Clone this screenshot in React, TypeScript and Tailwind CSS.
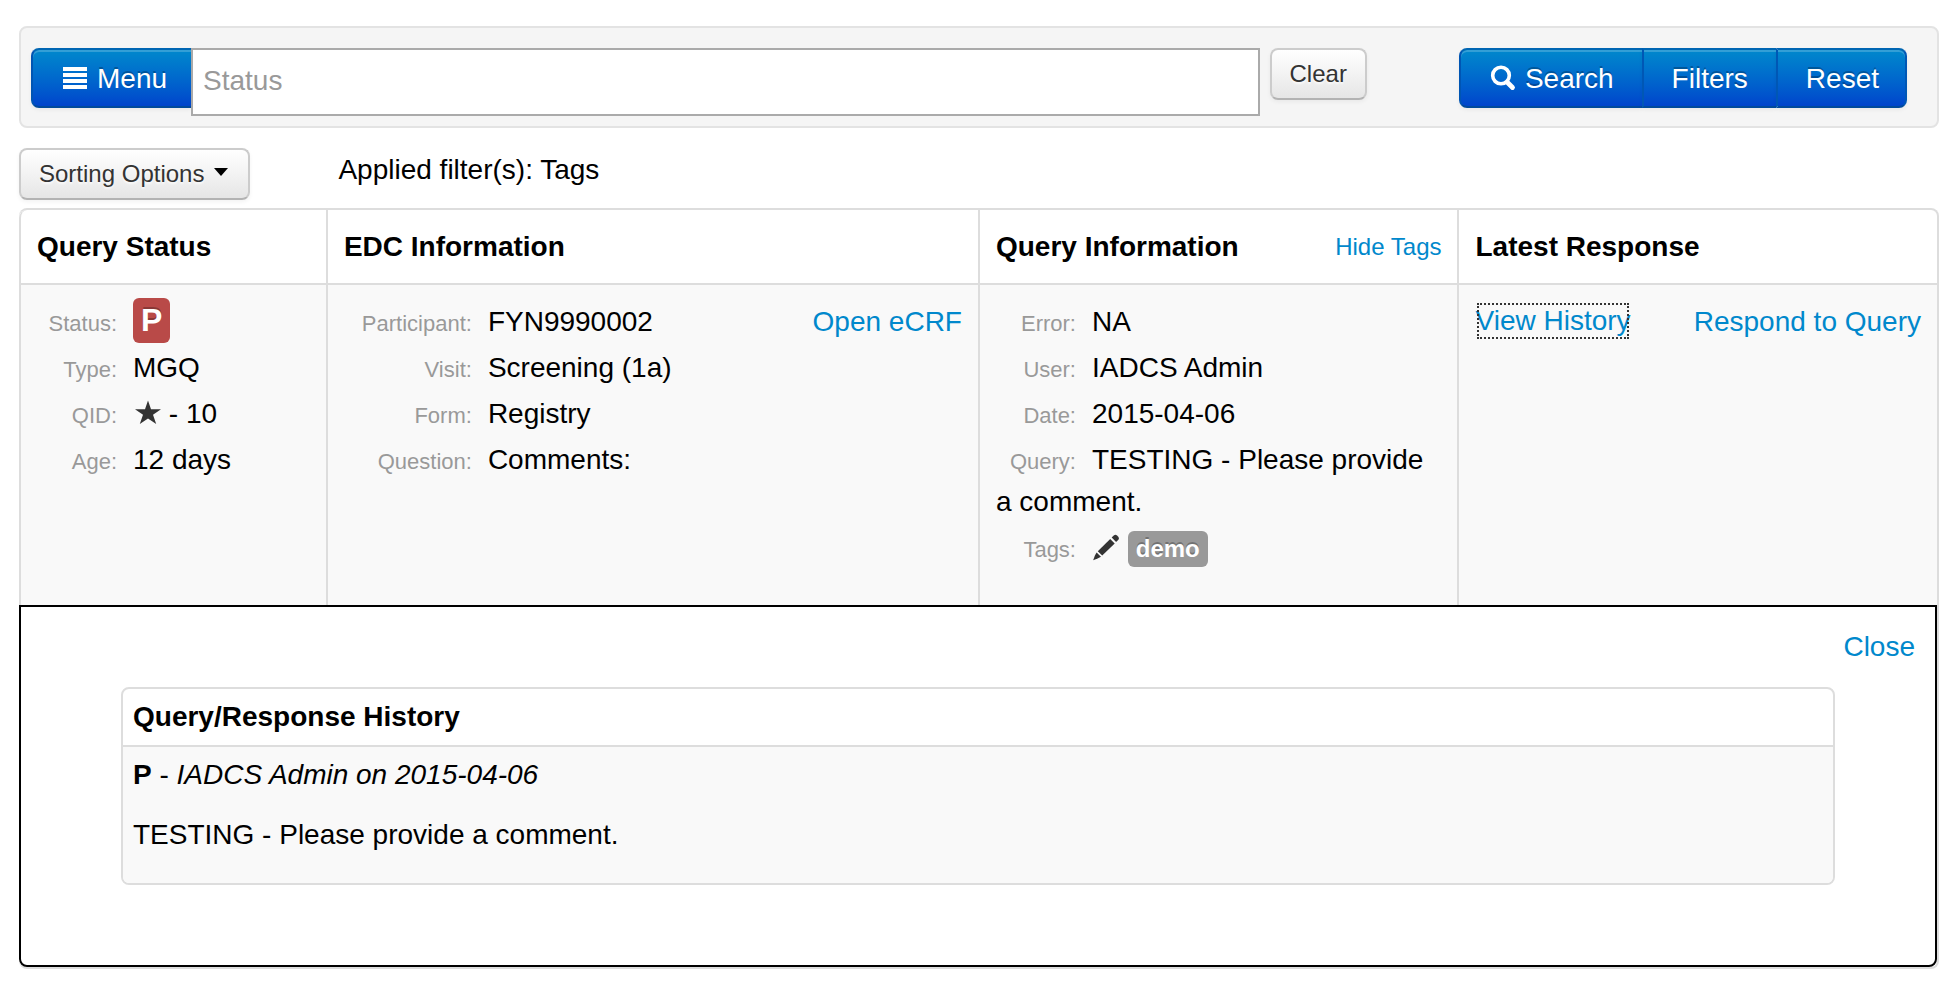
import type { ReactNode } from "react";

const primaryBtn =
  "flex h-[60px] shrink-0 items-center border-y-2 border-t-[#0066b3] border-b-[#004a9c] bg-linear-to-b from-[#0088cc] to-[#0044cc] pt-0.5 pl-7 text-[28px] leading-10 text-white [text-shadow:0_-2px_0_rgba(0,0,0,0.25)] shadow-[inset_0_2px_0_rgba(255,255,255,0.2),0_2px_4px_rgba(0,0,0,0.05)]";

const defaultBtn =
  "flex h-[52px] shrink-0 items-center rounded-lg border-2 border-[#cccccc] border-b-[#b3b3b3] bg-linear-to-b from-white to-[#e6e6e6] pl-[18px] text-2xl leading-10 text-[#333333] [text-shadow:0_2px_2px_rgba(255,255,255,0.75)] shadow-[inset_0_2px_0_rgba(255,255,255,0.2),0_2px_4px_rgba(0,0,0,0.05)]";

const cell = "border-l-2 border-[#dddddd] px-4 text-left align-top";

function JustifyIcon() {
  return (
    <svg viewBox="0 0 28 28" className="size-7" fill="currentColor" aria-hidden="true">
      <path d="M2 2h24v4H2zM2 8h24v4H2zM2 14h24v4H2zM2 20h24v4H2z" />
    </svg>
  );
}

function SearchIcon() {
  return (
    <svg viewBox="0 0 28 28" className="size-7" fill="none" stroke="currentColor" aria-hidden="true">
      <circle cx="12" cy="10.500" r="8.300" strokeWidth="3.600" />
      <path d="M18.500 17.500 23.500 22.500" strokeWidth="4.800" strokeLinecap="round" />
    </svg>
  );
}

function StarIcon() {
  return (
    <svg viewBox="0 0 28 28" className="inline-block size-7 align-[-4px]" fill="#333333" aria-hidden="true">
      <path d="M15 1.500 18 10.300H28L20 15.800 23.200 25 15 19.600 6.800 25 10 15.800 2 10.300H12z" />
    </svg>
  );
}

function PencilIcon() {
  return (
    <svg viewBox="0 0 28 28" className="inline-block size-7 align-[-4px]" fill="#333333" aria-hidden="true">
      <path d="M19.700 4.600 22 2.300Q23.500 1 25 2.400L26.300 3.700Q27.700 5.200 26.400 6.700L24.100 9z" />
      <path d="M18.200 6 22.700 10.500 10.200 22.600 5.800 18.200z" />
      <path d="M4.600 19.400 9 23.800 5.600 25.600 1.200 27.200 2.800 22.800z" />
    </svg>
  );
}

function Field({ label, wide, children }: { label: string; wide?: boolean; children: ReactNode }) {
  return (
    <li className="mb-1">
      <span
        className={`mr-4 inline-block text-right text-[22px] leading-none text-[#999999] ${wide ? "w-32" : "w-20"}`}
      >
        {label}
      </span>
      {children}
    </li>
  );
}

function Link({ children, className = "" }: { children: ReactNode; className?: string }) {
  return (
    <a href="#" className={`text-[#0088cc] ${className}`}>
      {children}
    </a>
  );
}

function Toolbar() {
  return (
    <form className="flex items-start rounded-lg border-2 border-[#e3e3e3] bg-[#f5f5f5] pt-5 pr-[30px] pb-2.5 pl-2.5">
      <button type="button" className={`${primaryBtn} gap-2 rounded-l-lg border-l-2 border-l-[#0055b3] pr-6`}>
        <JustifyIcon />
        Menu
      </button>
      <input
        type="text"
        aria-label="Status"
        placeholder="Status"
        className="h-[68px] min-w-0 flex-1 border-2 border-[#aaaaaa] bg-white px-2.5 pb-0.5 text-[28px] text-[#555555] placeholder:text-[#999999]"
      />
      <button type="button" className={`${defaultBtn} mr-[92px] ml-2.5 pr-[18px]`}>
        Clear
      </button>
      <div className="flex">
        <button type="button" className={`${primaryBtn} gap-2 rounded-l-lg border-l-2 border-l-[#0055b3] pr-7`}>
          <SearchIcon />
          Search
        </button>
        <button type="button" className={`${primaryBtn} border-l-2 border-l-[#0057b5] pr-7`}>
          Filters
        </button>
        <button type="button" className={`${primaryBtn} rounded-r-lg border-x-2 border-x-[#0057b5] pr-[26px]`}>
          Reset
        </button>
      </div>
    </form>
  );
}

function HistoryPanel() {
  return (
    <>
      <div className="mb-5 px-5 text-right">
        <Link>Close</Link>
      </div>
      <div className="mx-[100px]">
        <table className="w-full border-separate border-spacing-0 rounded-lg border-2 border-[#dddddd]">
          <thead>
            <tr>
              <th className="px-2.5 py-2 text-left font-bold">Query/Response History</th>
            </tr>
          </thead>
          <tbody>
            <tr>
              <td className="rounded-b-md border-t-2 border-[#dddddd] bg-[#f9f9f9] px-2.5 py-2">
                <p className="mb-5">
                  <strong>P</strong> - <em>IADCS Admin on 2015-04-06</em>
                </p>
                <p className="mb-5">TESTING - Please provide a comment.</p>
              </td>
            </tr>
          </tbody>
        </table>
      </div>
    </>
  );
}

export default function App() {
  return (
    <main className="bg-white pt-[26px] pr-[21px] pb-4 pl-[19px] font-['Liberation_Sans',Arial,sans-serif] text-[28px] leading-10 text-black">
      <Toolbar />

      <div className="mt-5 mb-2 flex items-start">
        <button type="button" className={`${defaultBtn} gap-2.5 pr-5`}>
          Sorting Options
          <svg viewBox="0 0 14 8" className="mb-1 h-2 w-3.5" fill="#000000" aria-hidden="true">
            <path d="M0 0h14L7 8z" />
          </svg>
        </button>
        <p className="mt-0.5 ml-[88px]">Applied filter(s): Tags</p>
      </div>

      <table className="w-full table-fixed border-separate border-spacing-0 rounded-lg border-2 border-l-0 border-[#dddddd]">
        <colgroup>
          <col className="w-[16%]" />
          <col className="w-[34%]" />
          <col className="w-[25%]" />
          <col className="w-[25%]" />
        </colgroup>
        <thead className="leading-[41px]">
          <tr>
            <th className={`${cell} rounded-tl-lg py-4`}>Query Status</th>
            <th className={`${cell} py-4`}>EDC Information</th>
            <th className={`${cell} py-4`}>
              <div className="flex justify-between">
                Query Information
                <Link className="text-2xl leading-[41px] font-normal">Hide Tags</Link>
              </div>
            </th>
            <th className={`${cell} py-4`}>Latest Response</th>
          </tr>
        </thead>
        <tbody>
          <tr className="bg-[#f9f9f9] leading-[42px]">
            <td className={`${cell} border-t-2 pt-4`}>
              <ul>
                <Field label="Status:">
                  <span className="-my-1 inline-block rounded-md bg-[#b94a48] px-2 text-[32px] leading-[45px] font-bold text-white [text-shadow:0_-2px_0_rgba(0,0,0,0.25)]">
                    P
                  </span>
                </Field>
                <Field label="Type:">MGQ</Field>
                <Field label="QID:">
                  <StarIcon /> - 10
                </Field>
                <Field label="Age:">12 days</Field>
              </ul>
            </td>
            <td className={`${cell} border-t-2 pt-4`}>
              <div className="flex items-start justify-between">
                <ul>
                  <Field wide label="Participant:">FYN9990002</Field>
                  <Field wide label="Visit:">Screening (1a)</Field>
                  <Field wide label="Form:">Registry</Field>
                  <Field wide label="Question:">Comments:</Field>
                </ul>
                <Link>Open eCRF</Link>
              </div>
            </td>
            <td className={`${cell} border-t-2 pt-4 pb-8`}>
              <ul>
                <Field label="Error:">NA</Field>
                <Field label="User:">IADCS Admin</Field>
                <Field label="Date:">2015-04-06</Field>
                <Field label="Query:">TESTING - Please provide a comment.</Field>
                <Field label="Tags:">
                  <PencilIcon />{" "}
                  <span className="inline-block rounded-md bg-[#999999] px-2 text-2xl leading-9 font-bold text-white [text-shadow:0_-2px_0_rgba(0,0,0,0.25)]">
                    demo
                  </span>
                </Field>
              </ul>
            </td>
            <td className={`${cell} border-t-2 pt-4`}>
              <div className="flex items-start justify-between">
                <Link className="leading-10 outline-2 -outline-offset-4 outline-dotted outline-[#333333]">
                  View History
                </Link>
                <Link>Respond to Query</Link>
              </div>
            </td>
          </tr>
          <tr>
            <td colSpan={4} className="rounded-b-lg border-2 border-black pt-5 pb-20">
              <HistoryPanel />
            </td>
          </tr>
        </tbody>
      </table>
    </main>
  );
}
